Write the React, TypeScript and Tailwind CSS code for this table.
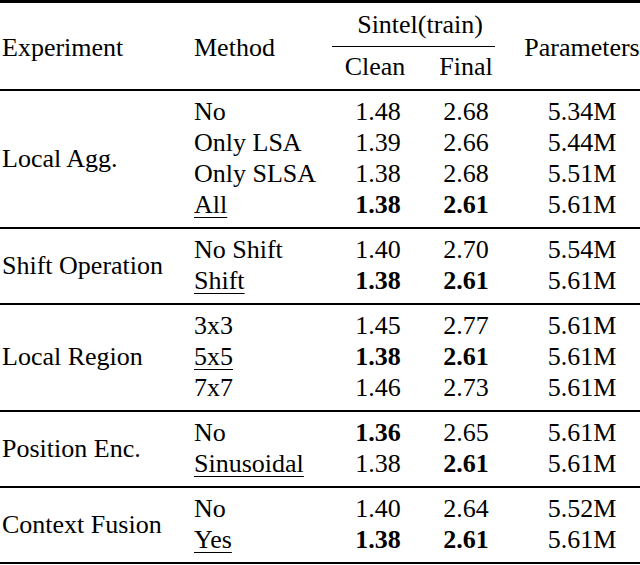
import React from 'react';

type Row = {
  method: string;
  clean: string;
  final: string;
  params: string;
  cleanBold?: boolean;
  finalBold?: boolean;
  underline?: boolean;
};

type Section = {
  name: string;
  rows: Row[];
};

const sections: Section[] = [
  {
    name: 'Local Agg.',
    rows: [
      { method: 'No', clean: '1.48', final: '2.68', params: '5.34M' },
      { method: 'Only LSA', clean: '1.39', final: '2.66', params: '5.44M' },
      { method: 'Only SLSA', clean: '1.38', final: '2.68', params: '5.51M' },
      { method: 'All', clean: '1.38', final: '2.61', params: '5.61M', cleanBold: true, finalBold: true, underline: true },
    ],
  },
  {
    name: 'Shift Operation',
    rows: [
      { method: 'No Shift', clean: '1.40', final: '2.70', params: '5.54M' },
      { method: 'Shift', clean: '1.38', final: '2.61', params: '5.61M', cleanBold: true, finalBold: true, underline: true },
    ],
  },
  {
    name: 'Local Region',
    rows: [
      { method: '3x3', clean: '1.45', final: '2.77', params: '5.61M' },
      { method: '5x5', clean: '1.38', final: '2.61', params: '5.61M', cleanBold: true, finalBold: true, underline: true },
      { method: '7x7', clean: '1.46', final: '2.73', params: '5.61M' },
    ],
  },
  {
    name: 'Position Enc.',
    rows: [
      { method: 'No', clean: '1.36', final: '2.65', params: '5.61M', cleanBold: true },
      { method: 'Sinusoidal', clean: '1.38', final: '2.61', params: '5.61M', finalBold: true, underline: true },
    ],
  },
  {
    name: 'Context Fusion',
    rows: [
      { method: 'No', clean: '1.40', final: '2.64', params: '5.52M' },
      { method: 'Yes', clean: '1.38', final: '2.61', params: '5.61M', cleanBold: true, finalBold: true, underline: true },
    ],
  },
];

const cols = 'grid grid-cols-[194px_138px_92px_84px_132px]';

const App = () => {
  return (
    <div className="w-[640px] h-[565px] bg-white text-black text-[26px] leading-[31px] font-['Liberation_Serif','Times_New_Roman',serif]">
      {/* header block */}
      <div className={`${cols} border-t-[3px] border-b-2 border-black pt-[6px] pb-[7px]`}>
        <div className="row-span-2 self-center pl-[2px] pt-[3px]">Experiment</div>
        <div className="row-span-2 self-center pt-[3px]">Method</div>
        <div className="col-span-2 flex flex-col">
          <div className="text-center">Sintel(train)</div>
          <div className="h-px bg-black mt-[6px] mr-[13px]" />
        </div>
        <div className="row-span-2 self-center text-center pl-[16px] pt-[3px]">Parameters</div>
        <div className="text-center pr-[6px] mt-[4px]">Clean</div>
        <div className="text-center mt-[4px]">Final</div>
      </div>

      {sections.map((s) => (
        <div key={s.name} className={`${cols} border-b-2 border-black pt-[5px] pb-[7px]`}>
          <div className="self-center pl-[2px]" style={{ gridRow: `1 / span ${s.rows.length}` }}>
            {s.name}
          </div>
          {s.rows.map((r, i) => (
            <React.Fragment key={i}>
              <div className="col-start-2">
                <span className={r.underline ? 'underline decoration-1 underline-offset-[4px]' : ''}>{r.method}</span>
              </div>
              <div className={`text-center ${r.cleanBold ? 'font-bold' : ''}`}>{r.clean}</div>
              <div className={`text-center ${r.finalBold ? 'font-bold' : ''}`}>{r.final}</div>
              <div className="text-center pl-[16px]">{r.params}</div>
            </React.Fragment>
          ))}
        </div>
      ))}
    </div>
  );
};

export default App;
